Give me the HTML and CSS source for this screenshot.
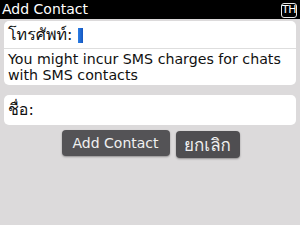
FILE: index.html
```html
<!DOCTYPE html>
<html>
<head>
<meta charset="utf-8">
<link rel="stylesheet" href="styles.css">
</head>
<body>
<div class="titlebar">
  <span class="title">Add Contact</span>
  <span class="lang">TH</span>
</div>
<div class="main">
  <div class="card">
    <div class="field">
      <span class="label">โทรศัพท์:</span>
      <span class="cursor"></span>
    </div>
    <div class="note">You might incur SMS charges for chats with SMS contacts</div>
  </div>
  <div class="card card-name">
    <span class="label">ชื่อ:</span>
  </div>
  <div class="buttons">
    <button class="btn btn-add">Add Contact</button>
    <button class="btn btn-cancel"><span class="thai">ยกเลิก</span></button>
  </div>
</div>
</body>
</html>
```
FILE: styles.css
```css
html, body {
  margin: 0;
  padding: 0;
}
body {
  width: 300px;
  height: 225px;
  background: #dcdadb;
  font-family: "DejaVu Sans", "Loma", "Garuda", "Norasi", "Noto Sans Thai Looped", "Noto Sans Thai", "Noto Sans", sans-serif;
  font-size: 14px;
  overflow: hidden;
}
.titlebar {
  height: 19px;
  background: #000;
  color: #fff;
  display: flex;
  align-items: center;
  justify-content: space-between;
  padding: 0 3px 0 2px;
}
.title {
  font-size: 14px;
  line-height: 19px;
}
.lang {
  box-sizing: border-box;
  width: 16px;
  height: 15px;
  border: 1.5px solid #e8e8e8;
  border-radius: 3px;
  font-size: 11px;
  line-height: 12px;
  text-align: center;
  color: #fff;
  letter-spacing: -0.5px;
  margin-top: 1px;
}
.main {
  padding: 2px 4px 0;
}
.card {
  background: #fff;
  border-radius: 5px;
  color: #111;
}
.field {
  height: 27px;
  display: flex;
  align-items: center;
  padding-left: 4px;
  border-bottom: 1px solid #dedede;
}
.label {
  font-size: 16px;
  line-height: 20px;
}
.cursor {
  width: 5px;
  height: 15px;
  margin-left: 6px;
  margin-top: 1px;
  background: linear-gradient(to right, #2a7ee6, #1556c0);
}
.note {
  padding: 2px 4px 2px;
  line-height: 16px;
  font-size: 14.2px;
}
.card-name {
  margin-top: 10px;
  height: 30px;
  display: flex;
  align-items: center;
  padding-left: 4px;
}
.buttons {
  margin-top: 5px;
  display: flex;
  justify-content: center;
  align-items: flex-start;
  gap: 6px;
  padding-left: 1px;
}
.btn {
  font-family: "DejaVu Sans", "Loma", "Garuda", "Noto Sans Thai Looped", "Noto Sans Thai", "Noto Sans", sans-serif;
  font-size: 14px;
  color: #f0f0f0;
  background: #545356;
  border: none;
  border-radius: 4px;
  height: 26px;
  padding: 0;
  box-shadow: 0 1px 2px rgba(0,0,0,0.35);
}
.btn-add {
  width: 108px;
}
.btn-cancel {
  width: 64px;
  height: 27px;
  margin-top: 1px;
  background: #4f4e51;
}
.thai {
  font-size: 17px;
}
```
